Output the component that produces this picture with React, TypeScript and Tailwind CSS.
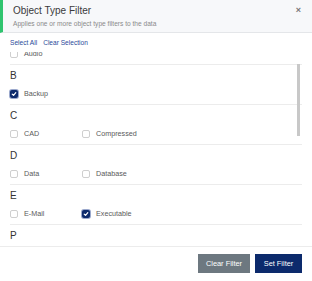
import React from 'react';

type Group = { letter: string; items: { label: string; checked?: boolean }[] };

const groups: Group[] = [
  { letter: 'A', items: [{ label: 'Audio' }] },
  { letter: 'B', items: [{ label: 'Backup', checked: true }] },
  { letter: 'C', items: [{ label: 'CAD' }, { label: 'Compressed' }] },
  { letter: 'D', items: [{ label: 'Data' }, { label: 'Database' }] },
  { letter: 'E', items: [{ label: 'E-Mail' }, { label: 'Executable', checked: true }] },
  { letter: 'P', items: [{ label: 'Presentation' }] },
];

const Checkbox: React.FC<{ checked?: boolean }> = ({ checked }) =>
  checked ? (
    <span className="flex h-[8px] w-[8px] items-center justify-center rounded-[2px] bg-[#0c2a6c] shadow-[0_0_0_1px_#9aa8cc]">
      <svg viewBox="0 0 10 10" className="h-[6px] w-[6px]" fill="none" stroke="white" strokeWidth="2" strokeLinecap="round" strokeLinejoin="round">
        <path d="M2 5.2 4.2 7.3 8 2.8" />
      </svg>
    </span>
  ) : (
    <span className="h-[8px] w-[8px] rounded-[2px] border border-[#cfcfcf] bg-white" />
  );

export default function App() {
  return (
    <div className="flex h-[281px] w-[312px] flex-col overflow-hidden bg-white font-['Liberation_Sans',Arial,sans-serif]">
      <header className="flex h-[33px] shrink-0 items-start justify-between border-b border-l-[3px] border-b-[#e4e6e9] border-l-[#2fc46f] bg-[#f7f8fa] pl-[10px] pr-[11px]">
        <div className="pt-[5px]">
          <h1 className="text-[10px] leading-[12px] text-[#3a3a3a]">Object Type Filter</h1>
          <p className="mt-[3px] text-[6.6px] leading-[8px] text-[#8a8a8a]">Applies one or more object type filters to the data</p>
        </div>
        <span className="pt-[5px] text-[9px] font-bold leading-[10px] text-[#777]">×</span>
      </header>

      <div className="flex h-[19px] shrink-0 items-start gap-[6px] pl-[10px] pt-[6px] text-[6.6px] leading-[8px] text-[#2a4a9a]">
        <span>Select All</span>
        <span>Clear Selection</span>
      </div>

      <div className="relative h-[194px] w-[302px] shrink-0 overflow-hidden">
        <div className="-mt-[28px]">
          {groups.map(g => (
            <div key={g.letter} className="ml-[10px] border-t border-[#ececec] pb-[3px]">
              <div className="flex h-[21px] items-center pt-[1px] text-[10px] leading-none text-[#333]">{g.letter}</div>
              <div className="grid h-[15px] grid-cols-[72px_72px] items-center">
                {g.items.map(it => (
                  <div key={it.label} className="flex items-center gap-[6px]">
                    <Checkbox checked={it.checked} />
                    <span className="text-[7.2px] leading-none text-[#5a5a5a]">{it.label}</span>
                  </div>
                ))}
              </div>
            </div>
          ))}
        </div>
        <div className="absolute left-[297px] top-[12px] h-[72px] w-[3px] bg-[#c8c8c8]" />
      </div>

      <footer className="flex flex-1 items-start justify-end gap-[5px] border-t border-[#ececec] pr-[10px] pt-[7px]">
        <button className="h-[19px] w-[52px] bg-[#6d7880] text-[7.4px] text-white">Clear Filter</button>
        <button className="h-[19px] w-[47px] bg-[#0c2a6c] text-[7.4px] text-white">Set Filter</button>
      </footer>
    </div>
  );
}
